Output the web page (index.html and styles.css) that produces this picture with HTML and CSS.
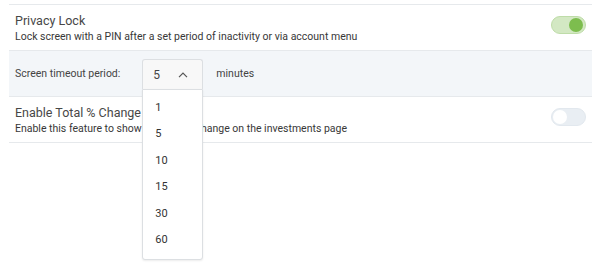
FILE: index.html
```html
<!DOCTYPE html>
<html>
<head>
<meta charset="utf-8">
<link rel="stylesheet" href="styles.css">
</head>
<body>
<div class="settings">
  <div class="row">
    <div class="text">
      <div class="title">Privacy Lock</div>
      <div class="desc">Lock screen with a PIN after a set period of inactivity or via account menu</div>
    </div>
    <span class="toggle on"><span class="knob"></span></span>
  </div>
  <div class="subrow">
    <span class="label">Screen timeout period:</span>
    <div class="select">
      <div class="select-box">
        <span class="value">5</span>
        <svg class="chev" width="10" height="6" viewBox="0 0 10 6"><path d="M1 5.2 L5 1.2 L9 5.2" fill="none" stroke="#555" stroke-width="1.2"/></svg>
      </div>
      <ul class="menu">
        <li>1</li>
        <li>5</li>
        <li>10</li>
        <li>15</li>
        <li>30</li>
        <li>60</li>
      </ul>
    </div>
    <span class="label unit">minutes</span>
  </div>
  <div class="row">
    <div class="text">
      <div class="title">Enable Total % Change</div>
      <div class="desc">Enable this feature to show the total % change on the investments page</div>
    </div>
    <span class="toggle"><span class="knob"></span></span>
  </div>
</div>
</body>
</html>
```
FILE: styles.css
```css
html {
  background: #fff;
  min-height: 100%;
}
body {
  margin: 4px 10px 0 9px;
  min-height: 264px;
  font-family: Roboto, "Noto Sans", sans-serif;
  color: #333;
}
.settings {
  border-top: 1px solid #e6e9ec;
}
.row {
  display: flex;
  align-items: center;
  justify-content: space-between;
  height: 45px;
  padding: 0 6px 0 6px;
  border-bottom: 1px solid #e6e9ec;
}
.text {
  padding-top: 2px;
}
.title {
  font-size: 12.5px;
  color: #474747;
  line-height: 16px;
}
.desc {
  font-size: 10.5px;
  color: #383838;
  line-height: 16px;
}
.subrow {
  display: flex;
  align-items: center;
  height: 45px;
  padding: 0 6px;
  background: #f3f6f9;
  border-bottom: 1px solid #e6e9ec;
}
.label {
  font-size: 10.5px;
  color: #444;
}
.unit {
  margin-left: 13px;
}
.select {
  position: relative;
  margin-left: 22px;
  margin-top: 1px;
}
.select-box {
  width: 61px;
  height: 30px;
  box-sizing: border-box;
  border: 1px solid #dcdfe2;
  border-bottom: none;
  border-radius: 3px 3px 0 0;
  background: #f8f8f8;
  display: flex;
  align-items: center;
  padding-left: 10px;
  gap: 18px;
  font-size: 12px;
  color: #444;
}
.chev {
  display: block;
}
.menu {
  position: absolute;
  top: 30px;
  left: 0;
  width: 61px;
  box-sizing: border-box;
  margin: 0;
  padding: 5px 0 6px;
  list-style: none;
  background: #fff;
  border: 1px solid #dcdfe2;
  border-radius: 0 0 3px 3px;
  box-shadow: 0 1px 2px rgba(0,0,0,0.08);
  z-index: 2;
}
.menu li {
  height: 26.4px;
  line-height: 26px;
  padding-left: 12px;
  font-size: 11px;
  color: #333;
}
.toggle {
  position: relative;
  display: block;
  width: 35px;
  height: 18px;
  box-sizing: border-box;
  border-radius: 9px;
  background: #e9eef3;
  border: 1px solid #e2e8ee;
  margin-top: -6px;
}
.toggle .knob {
  position: absolute;
  top: 1px;
  left: 1px;
  width: 14px;
  height: 14px;
  border-radius: 50%;
  background: #fff;
}
.toggle.on {
  background: #d3e8c3;
  border-color: #bedca8;
}
.toggle.on .knob {
  left: auto;
  right: 2px;
  background: #7dbd4e;
}
```
